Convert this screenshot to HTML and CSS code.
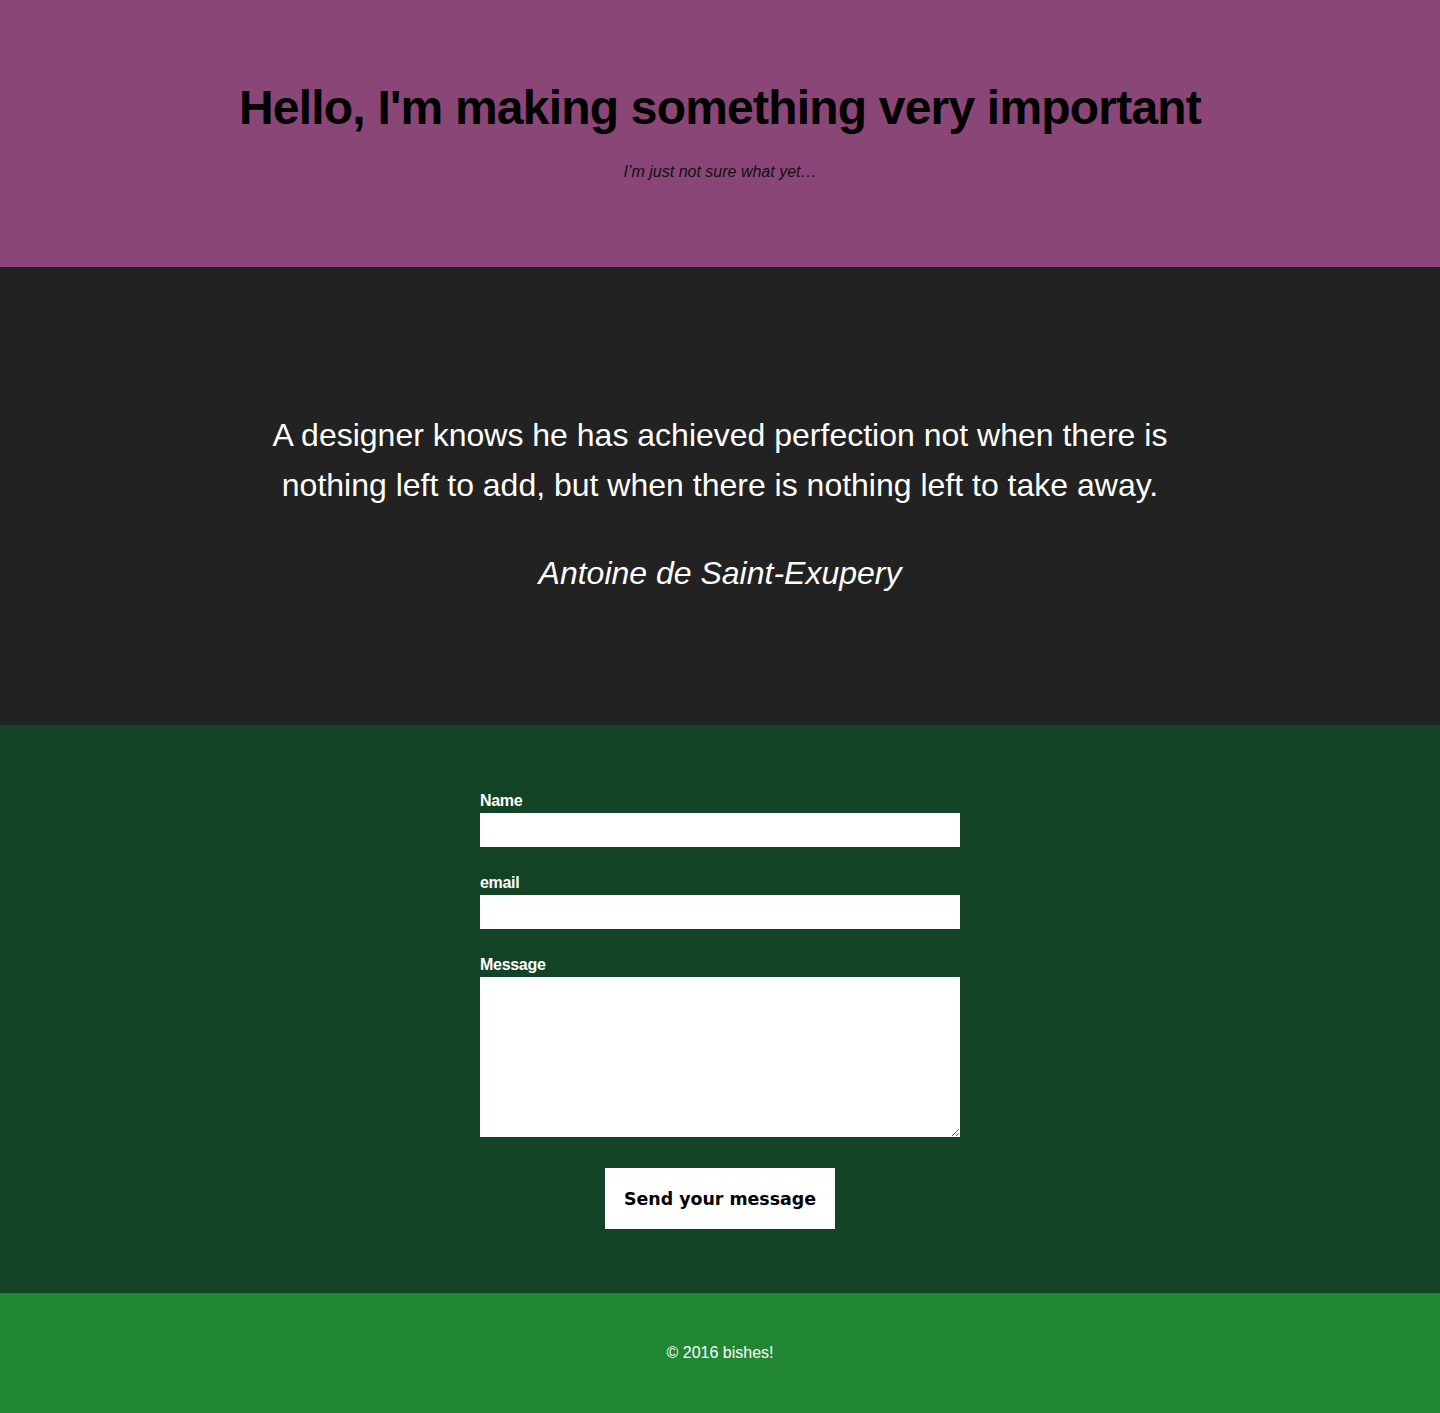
FILE: index.html
```html
<!DOCTYPE html>
<html lang="en">
<head>
<meta charset="utf-8">
<title>Hello</title>
<link rel="stylesheet" href="styles.css">
</head>
<body>
<header class="hero">
  <h1 class="hero-title">Hello, I'm making something very important</h1>
  <p class="hero-sub">I’m just not sure what yet…</p>
</header>
<section class="quote">
  <p class="quote-text">A designer knows he has achieved perfection not when there is nothing left to add, but when there is nothing left to take away.</p>
  <p class="quote-author">Antoine de Saint-Exupery</p>
</section>
<section class="contact">
  <form class="contact-form">
    <div class="field">
      <label class="field-label" for="name">Name</label>
      <input class="field-input" id="name" type="text">
    </div>
    <div class="field">
      <label class="field-label" for="email">email</label>
      <input class="field-input" id="email" type="email">
    </div>
    <div class="field">
      <label class="field-label" for="msg">Message</label>
      <textarea class="field-area" id="msg"></textarea>
    </div>
    <div class="actions">
      <button class="send" type="button">Send your message</button>
    </div>
  </form>
</section>
<footer class="footer">
  <p class="footer-text">© 2016 bishes!</p>
</footer>
</body>
</html>
```

FILE: styles.css
```css
* { box-sizing: border-box; }
html, body { margin: 0; padding: 0; }
body {
  font-family: "Liberation Sans", Arial, Helvetica, sans-serif;
  color: #000;
}
.hero {
  background: #8a4677;
  padding: 81px 20px 86px;
  text-align: center;
}
.hero-title {
  margin: 0 0 28px;
  font-size: 48px;
  font-weight: 700;
  line-height: 54px;
  letter-spacing: -0.8px;
}
.hero-sub {
  margin: 0;
  font-size: 16px;
  font-style: italic;
  line-height: 18px;
  color: #111;
}
.quote {
  background: #222222;
  color: #fff;
  text-align: center;
  padding: 143px 20px 128px;
}
.quote-text {
  max-width: 940px;
  margin: 0 auto 39px;
  font-size: 32px;
  line-height: 50px;
}
.quote-author {
  margin: 0;
  font-size: 32px;
  line-height: 48px;
  font-style: italic;
}
.contact {
  background: #134325;
  padding: 66px 20px 64px;
}
.contact-form {
  width: 480px;
  margin: 0 auto;
  display: flex;
  flex-direction: column;
  gap: 26px;
}
.field {
  display: flex;
  flex-direction: column;
  gap: 3px;
}
.field-label {
  color: #fff;
  font-weight: 700;
  font-size: 16px;
  line-height: 19px;
  letter-spacing: -0.3px;
}
.field-input {
  display: block;
  width: 480px;
  height: 34px;
  border: 0;
  margin: 0;
  padding: 0 8px;
  background: #fff;
  font: 16px "Liberation Sans", Arial, sans-serif;
}
.field-area {
  display: block;
  width: 480px;
  height: 160px;
  border: 0;
  margin: 0;
  padding: 8px;
  background: #fff;
  font: 16px "Liberation Sans", Arial, sans-serif;
}
.actions {
  display: flex;
  justify-content: center;
  padding-top: 5px;
}
.send {
  height: 61px;
  padding: 0 19px;
  border: 0;
  border-radius: 0;
  background: #fff;
  color: #000;
  font-family: "DejaVu Sans", "Lucida Grande", sans-serif;
  font-weight: 700;
  font-size: 17.4px;
  letter-spacing: 0;
}
.footer {
  background: #218734;
  padding: 51px 20px 51px;
  text-align: center;
}
.footer-text {
  margin: 0;
  color: #fff;
  font-size: 16px;
  line-height: 18px;
}
```
